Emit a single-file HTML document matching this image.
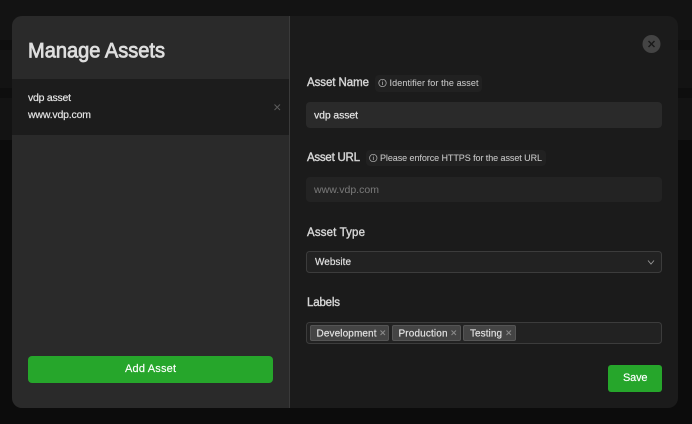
<!DOCTYPE html>
<html><head><meta charset="utf-8"><style>
html,body{margin:0;padding:0;background:#0c0c0c;width:692px;height:424px;overflow:hidden}
svg{display:block}
text{font-family:"Liberation Sans",sans-serif;fill:currentColor;stroke:currentColor;stroke-width:.18px}
.title{font-size:21px;color:#dedede;stroke-width:.8px}
.lab{font-size:11.5px;color:#d6d6d6;stroke-width:.38px}
.hint{font-size:9px;color:#c4c4c4;stroke-width:.08px}
.body{font-size:10.5px;color:#e4e4e4}
.chip{font-size:10px;color:#e2e2e2}
.btn{font-size:11px;color:#fff;stroke-width:.15px}
</style></head><body>
<svg width="692" height="424" viewBox="0 0 692 424" xmlns="http://www.w3.org/2000/svg">
<rect width="692" height="424" fill="#0c0c0c"/>
<rect width="692" height="140" fill="#131313"/>
<rect y="40" width="692" height="10" fill="#0e0e0e"/>
<rect y="88" width="692" height="10" fill="#0e0e0e"/>
<rect y="140" width="692" height="284" fill="#0c0c0c"/>
<rect x="12" y="16" width="666" height="392" rx="10" fill="#1b1b1b"/>
<path d="M289 16H22a10 10 0 0 0-10 10V398a10 10 0 0 0 10 10H289Z" fill="#2a2a2a"/>
<rect x="289" y="16" width="1" height="392" fill="#3a3a3a"/>
<rect x="12" y="79" width="277" height="56" fill="#1c1c1c"/>
<text class="title" x="28" y="57.500" textLength="137" lengthAdjust="spacingAndGlyphs">Manage Assets</text>
<text class="body" x="28" y="101" textLength="43">vdp asset</text>
<text class="body" x="28" y="118" textLength="63">www.vdp.com</text>
<path d="M274.500 104.500l5.500 5.500M280 104.500l-5.500 5.500" stroke="#5c5c5c" stroke-width="1" fill="none"/>
<rect x="28" y="356" width="245" height="27" rx="4" fill="#26a62b"/>
<text class="btn" x="125" y="372" textLength="51">Add Asset</text>
<circle cx="651.500" cy="44" r="9" fill="#444"/>
<path d="M648.500 41l6 6M654.500 41l-6 6" stroke="#1a1a1a" stroke-width="1.500" fill="none"/>
<text class="lab" x="307" y="86" textLength="62">Asset Name</text>
<rect x="375" y="75" width="107" height="17" rx="4" fill="#212121"/>
<circle cx="382.500" cy="83" r="3.700" fill="none" stroke="#bbb" stroke-width="0.700"/>
<path d="M382.500 82v3M382.500 80.600v0.800" stroke="#bbb" stroke-width="0.700"/>
<text class="hint" x="389.500" y="86" textLength="89">Identifier for the asset</text>
<rect x="306" y="102" width="356" height="26" rx="4" fill="#2a2a2a"/>
<text class="body" x="314" y="118.500" textLength="44" style="color:#e6e6e6">vdp asset</text>
<text class="lab" x="307" y="161" textLength="53">Asset URL</text>
<rect x="366" y="150" width="180" height="16" rx="4" fill="#212121"/>
<circle cx="373.300" cy="158" r="3.700" fill="none" stroke="#bbb" stroke-width="0.700"/>
<path d="M373.300 157v3M373.300 155.600v0.800" stroke="#bbb" stroke-width="0.700"/>
<text class="hint" x="380" y="161" textLength="162">Please enforce HTTPS for the asset URL</text>
<rect x="306" y="177" width="356" height="25" rx="4" fill="#232323"/>
<text class="body" x="314" y="193" textLength="65" style="color:#777;stroke-width:.05px">www.vdp.com</text>
<text class="lab" x="307" y="236" textLength="58">Asset Type</text>
<rect x="306.500" y="251.500" width="355" height="21" rx="3" fill="#222" stroke="#3c3c3c"/>
<text class="chip" x="315" y="265" textLength="36">Website</text>
<path d="M648 260.500l3 3.500 3-3.500" fill="none" stroke="#999" stroke-width="0.900"/>
<text class="lab" x="307" y="306" textLength="33">Labels</text>
<rect x="306.500" y="322.500" width="355" height="21" rx="3" fill="#222" stroke="#3c3c3c"/>
<rect x="310.500" y="325.500" width="78" height="15" rx="1.500" fill="#444" stroke="#555"/>
<text class="chip" x="316.500" y="336.500" textLength="60">Development</text>
<path d="M380.500 330.500l4.500 4.500M385 330.500l-4.500 4.500" stroke="#8a8a8a" stroke-width="1" fill="none"/>
<rect x="392.500" y="325.500" width="68" height="15" rx="1.500" fill="#444" stroke="#555"/>
<text class="chip" x="398.500" y="336.500" textLength="49">Production</text>
<path d="M451.500 330.500l4.500 4.500M456 330.500l-4.500 4.500" stroke="#8a8a8a" stroke-width="1" fill="none"/>
<rect x="463.500" y="325.500" width="52" height="15" rx="1.500" fill="#444" stroke="#555"/>
<text class="chip" x="470" y="336.500" textLength="32">Testing</text>
<path d="M506.500 330.500l4.500 4.500M511 330.500l-4.500 4.500" stroke="#8a8a8a" stroke-width="1" fill="none"/>
<rect x="608" y="365" width="54" height="27" rx="3" fill="#26a62b"/>
<text class="btn" x="623" y="381" textLength="24.500">Save</text>
</svg>
</body></html>
